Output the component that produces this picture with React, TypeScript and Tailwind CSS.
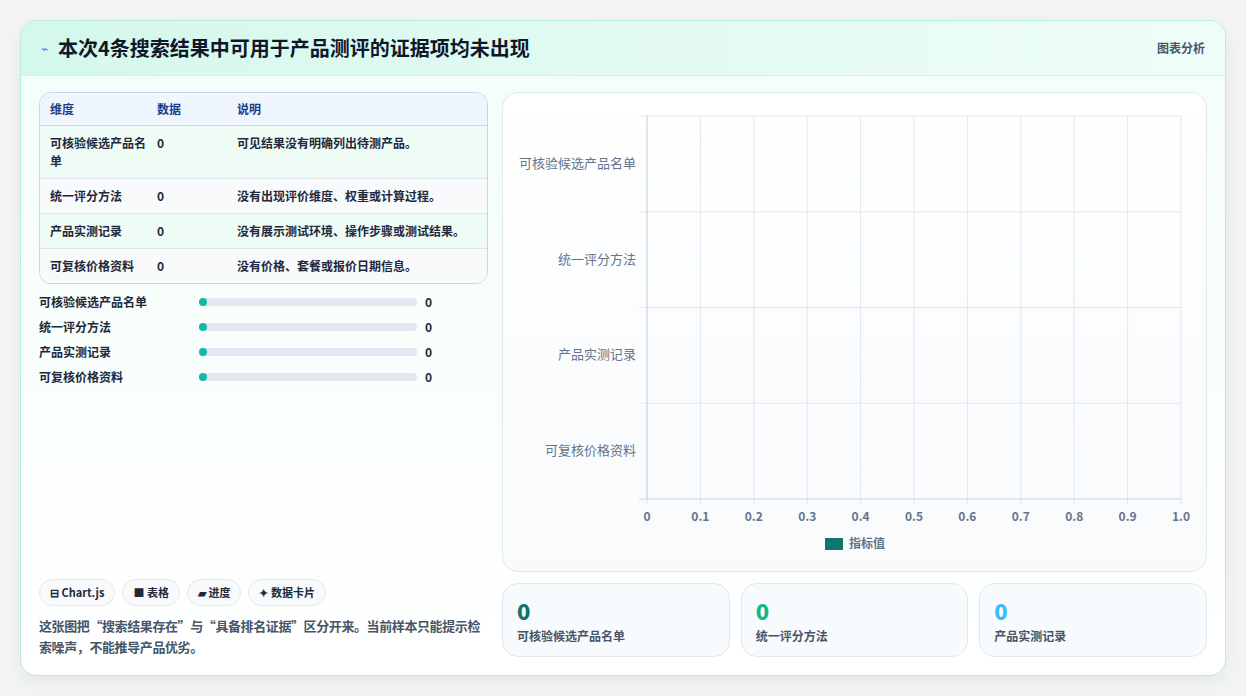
import React from "react"

const rows = [
  { k: "可核验候选产品名单", v: 0, d: "可见结果没有明确列出待测产品。" },
  { k: "统一评分方法", v: 0, d: "没有出现评价维度、权重或计算过程。" },
  { k: "产品实测记录", v: 0, d: "没有展示测试环境、操作步骤或测试结果。" },
  { k: "可复核价格资料", v: 0, d: "没有价格、套餐或报价日期信息。" },
]

function Chart() {
  const L = 144, R = 678, T = 23, B = 406
  const ticks = Array.from({ length: 11 }, (_, i) => i)
  const band = (B - T) / 4
  return (
    <svg width="703" height="480" className="block">
      {ticks.map((i) => {
        const x = L + ((R - L) * i) / 10
        return (
          <g key={i}>
            <line x1={x} y1={T} x2={x} y2={B + 6} stroke="#e2e8f0" />
            <text x={x} y={428} textAnchor="middle" fontSize="12" fontWeight="700" fill="#64748b">
              {i === 0 ? "0" : i === 10 ? "1.0" : (i / 10).toFixed(1)}
            </text>
          </g>
        )
      })}
      {[0, 1, 2, 3].map((i) => (
        <line key={i} x1={L - 8} y1={T + band * i} x2={R} y2={T + band * i} stroke="#e2e8f0" />
      ))}
      <line x1={L - 8} y1={B} x2={R} y2={B} stroke="#cbd5e1" />
      <line x1={L} y1={T} x2={L} y2={B} stroke="#cbd5e1" />
      {rows.map((r, i) => (
        <text key={r.k} x={133} y={T + band * i + band / 2 + 4} textAnchor="end" fontSize="13" fill="#64748b">
          {r.k}
        </text>
      ))}
      <rect x={322} y={445} width={18} height={12} fill="#0f766e" />
      <text x={346} y={455} fontSize="12" fontWeight="700" fill="#64748b">指标值</text>
    </svg>
  )
}

export default function App() {
  return (
    <div className="w-[1246px] h-[696px] bg-[#f3f4f6] p-5 pb-5" style={{ fontFamily: '"Noto Sans CJK SC", "Noto Sans", sans-serif' }}>
      <div className="h-[656px] rounded-2xl border border-[#b8ecdf] bg-gradient-to-b from-[#f2fdf9] to-white shadow-[0_6px_18px_rgba(0,0,0,0.06)] overflow-hidden flex flex-col">
        <div className="h-[55px] shrink-0 flex items-center justify-between px-5 bg-gradient-to-r from-[#d4f8ec] to-[#effdf8] border-b border-[#d1f2e8]">
          <div className="flex items-center gap-2.5">
            <span className="text-[#3b82f6] text-xs">⌁</span>
            <span className="text-[20px] font-bold text-[#0f172a]">本次4条搜索结果中可用于产品测评的证据项均未出现</span>
          </div>
          <span className="text-xs font-semibold text-[#475569]">图表分析</span>
        </div>
        <div className="flex-1 flex gap-[14px] px-[18px] pt-4 pb-[18px]">
          <div className="w-[450px] flex flex-col">
            <div className="rounded-xl border border-[#cbd5e1] overflow-hidden text-xs text-[#1e293b]">
              <div className="flex h-[33px] items-center bg-[#eef5fd] border-b border-[#cbd5e1] font-semibold text-[#1e3a8a]">
                <div className="w-[117px] pl-[10px]">维度</div>
                <div className="w-[80px]">数据</div>
                <div>说明</div>
              </div>
              {rows.map((r, i) => (
                <div key={r.k} className={`flex py-2 leading-[18px] font-semibold ${i % 2 ? "bg-[#f8fafc]" : "bg-[#effcf6]"} ${i < 3 ? "border-b border-[#dde4ec]" : ""}`}>
                  <div className="w-[117px] pl-[10px] pr-2">{r.k}</div>
                  <div className="w-[80px]">{r.v}</div>
                  <div className="flex-1">{r.d}</div>
                </div>
              ))}
            </div>
            <div className="mt-[10px] flex flex-col gap-[9px]">
              {rows.map((r) => (
                <div key={r.k} className="flex items-center h-4 text-xs font-semibold text-[#1e293b]">
                  <div className="w-[160px]">{r.k}</div>
                  <div className="w-[218px] h-2 rounded-full bg-[#e2e8f0] relative">
                    <div className="absolute left-0 top-0 w-2 h-2 rounded-full bg-[#14b8a6]" />
                  </div>
                  <div className="ml-2 font-bold">0</div>
                </div>
              ))}
            </div>
            <div className="mt-auto flex gap-[7px] text-[11px] font-semibold text-[#1e293b]">
              {["⊟ Chart.js", "■ 表格", "▰ 进度", "✦ 数据卡片"].map((c) => (
                <span key={c} className="h-[27px] px-[10px] flex items-center rounded-full border border-[#e2e8f0] bg-[#f8fafc]">{c}</span>
              ))}
            </div>
            <p className="mt-[9px] text-[13px] leading-[21px] font-semibold text-[#475569] tracking-[-0.4px]">
              这张图把“搜索结果存在”与“具备排名证据”区分开来。当前样本只能提示检索噪声，不能推导产品优劣。
            </p>
          </div>
          <div className="flex-1 flex flex-col gap-[11px]">
            <div className="h-[480px] rounded-2xl border border-[#e2e8f0] bg-gradient-to-b from-white to-[#f8fafc] overflow-hidden">
              <Chart />
            </div>
            <div className="flex gap-[11px] flex-1">
              {[
                ["可核验候选产品名单", "text-[#0f766e]"],
                ["统一评分方法", "text-[#10b981]"],
                ["产品实测记录", "text-[#38bdf8]"],
              ].map(([t, c]) => (
                <div key={t} className="flex-1 rounded-2xl border border-[#e2e8f0] bg-[#f8fbfd] px-[14px] pt-3">
                  <div className={`text-[22px] font-extrabold leading-7 ${c}`}>0</div>
                  <div className="mt-1 text-xs font-semibold text-[#475569]">{t}</div>
                </div>
              ))}
            </div>
          </div>
        </div>
      </div>
    </div>
  )
}
